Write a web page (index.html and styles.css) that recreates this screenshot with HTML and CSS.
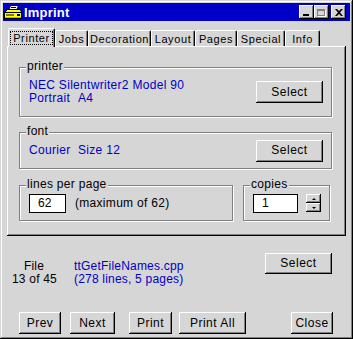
FILE: index.html
```html
<!DOCTYPE html>
<html lang="en">
<head>
  <meta charset="UTF-8" />
  <title>Imprint</title>
  <link rel="stylesheet" href="styles.css">
</head>
<body>
  <div class="window">
    <div class="titlebar">
      <svg class="app-icon" width="18" height="15" viewBox="0 0 18 15">
        <polygon points="6.5,0.5 14.5,0.5 12.5,5.5 4.5,5.5" fill="#fff" stroke="#000"/>
        <line x1="7" y1="2.5" x2="12" y2="2.5" stroke="#000"/>
        <polygon points="3.5,4.5 16.5,4.5 17.5,7.5 0.5,7.5" fill="#ffff00" stroke="#000"/>
        <rect x="0.5" y="7.5" width="17" height="6" fill="#ffff00" stroke="#000"/>
        <rect x="2" y="9" width="8" height="2" fill="#808000"/>
        <rect x="13" y="9" width="3" height="2" fill="#000"/>
        <line x1="1" y1="12.5" x2="17" y2="12.5" stroke="#c0c000"/>
      </svg>
      <span class="title">Imprint</span>
      <div class="title-buttons">
        <div class="tbtn"><span class="glyph-min"></span></div>
        <div class="tbtn"><span class="glyph-max"></span></div>
        <div class="tbtn close">
          <svg width="8" height="7" viewBox="0 0 8 7">
            <path d="M0 0h2l2 2 2-2h2L5 3.5 8 7H6L4 5 2 7H0l3-3.5z" fill="#000"/>
          </svg>
        </div>
      </div>
    </div>

    <div class="main">
      <div class="tabs">
        <div class="tab active"><span class="focus">Printer</span></div>
        <div class="tab t-jobs">Jobs</div>
        <div class="tab t-deco">Decoration</div>
        <div class="tab t-layout">Layout</div>
        <div class="tab t-pages">Pages</div>
        <div class="tab t-special">Special</div>
        <div class="tab t-info">Info</div>
      </div>

      <div class="panel">
        <div class="group g-printer">
          <span class="legend">printer</span>
          <div class="info">
            <div>NEC Silentwriter2 Model 90</div>
            <div><span class="col1">Portrait</span>A4</div>
          </div>
          <div class="btn wide">Select</div>
        </div>

        <div class="group g-font">
          <span class="legend">font</span>
          <div class="info">
            <div><span class="col1">Courier</span>Size 12</div>
          </div>
          <div class="btn wide">Select</div>
        </div>

        <div class="group-row">
          <div class="group g-lines">
            <span class="legend">lines per page</span>
            <div class="field lines-field">62</div>
            <span class="note">(maximum of 62)</span>
          </div>
          <div class="group g-copies">
            <span class="legend">copies</span>
            <div class="field copies-field">1</div>
            <div class="spinner">
              <div class="spin"><span class="arrow-up"></span></div>
              <div class="spin"><span class="arrow-down"></span></div>
            </div>
          </div>
        </div>
      </div>

      <div class="file-row">
        <div class="file-label">
          <div>File</div>
          <div>13 of 45</div>
        </div>
        <div class="file-name">
          <div>ttGetFileNames.cpp</div>
          <div>(278 lines, 5 pages)</div>
        </div>
        <div class="btn wide file-select">Select</div>
      </div>

      <div class="actions">
        <div class="btn b-prev">Prev</div>
        <div class="btn b-next">Next</div>
        <div class="btn b-print">Print</div>
        <div class="btn wide b-all">Print All</div>
        <div class="btn b-close">Close</div>
      </div>
    </div>
  </div>
</body>
</html>
```

FILE: styles.css
```css
body {
  margin: 0;
  font-family: 'Liberation Sans', Arial, sans-serif;
  font-size: 11px;
  color: #000;
}

.window {
  width: 353px;
  height: 339px;
  box-sizing: border-box;
  padding: 3px;
  background: #d6d6d6;
  box-shadow: inset -1px -1px #000, inset 1px 1px #d6d6d6,
              inset -2px -2px #808080, inset 2px 2px #fff;
  overflow: hidden;
}

.titlebar {
  height: 18px;
  background: #0000c8;
  display: flex;
  align-items: center;
  padding-left: 1px;
}

.app-icon {
  margin-right: 2px;
}

.title {
  color: #fff;
  font-weight: bold;
  font-size: 13px;
  letter-spacing: 0.2px;
}

.title-buttons {
  margin-left: auto;
  margin-right: 4px;
  display: flex;
}

.tbtn {
  width: 15px;
  height: 14px;
  box-sizing: border-box;
  background: #d6d6d6;
  box-shadow: inset -1px -1px #000, inset 1px 1px #fff, inset -2px -2px #808080;
  display: flex;
  align-items: center;
  justify-content: center;
}

.tbtn.close {
  margin-left: 2px;
}

.glyph-min {
  width: 6px;
  height: 2px;
  background: #000;
  margin-top: 6px;
  margin-right: 2px;
}

.glyph-max {
  width: 8px;
  height: 7px;
  box-sizing: border-box;
  border: 1px solid #808080;
  border-top-width: 2px;
  box-shadow: 1px 1px 0 #fff;
  margin-right: 1px;
}

.main {
  padding: 7px 4px 0 4px;
}

.tabs {
  display: flex;
  align-items: flex-end;
  height: 19px;
  margin-bottom: -1px;
  position: relative;
  z-index: 1;
  font-size: 11px;
  letter-spacing: 0.6px;
  white-space: nowrap;
}

.tab {
  height: 16px;
  box-sizing: border-box;
  padding-top: 2px;
  text-align: center;
  border-top: 1px solid #fff;
  border-left: 1px solid #fff;
  border-right: 1px solid #000;
  border-radius: 2px 2px 0 0;
  box-shadow: inset -1px 0 #808080;
  margin-bottom: 1px;
}

.tab.active {
  height: 19px;
  width: 47px;
  margin-left: 1px;
  margin-bottom: 0;
  background: #d6d6d6;
  padding-top: 3px;
}

.focus {
  outline: 1px dotted #000;
  outline-offset: 0;
  padding: 0 2px;
}

.t-jobs { width: 33px; }
.t-deco { width: 63px; }
.t-layout { width: 44px; }
.t-pages { width: 42px; }
.t-special { width: 48px; }
.t-info { width: 35px; }

.panel {
  height: 190px;
  box-sizing: border-box;
  padding: 21px 12px 0 12px;
  box-shadow: inset -1px -1px #000, inset 1px 1px #fff, inset -2px -2px #808080;
}

.group {
  position: relative;
  box-sizing: border-box;
  border: 1px solid #808080;
  box-shadow: 1px 1px 0 #fff, inset 1px 1px 0 #fff;
  display: flex;
  align-items: center;
  padding: 0 8px 0 9px;
  width: 313px;
}

.legend {
  position: absolute;
  top: -8px;
  left: 6px;
  padding: 0 1px;
  background: #d6d6d6;
  line-height: 13px;
  font-size: 12px;
  letter-spacing: 0.3px;
  white-space: nowrap;
}

.g-printer {
  height: 50px;
}

.g-font {
  height: 37px;
  margin-top: 15px;
}

.info {
  color: #0000c8;
  line-height: 13px;
  font-size: 12px;
  letter-spacing: 0.3px;
  white-space: nowrap;
}

.col1 {
  display: inline-block;
  width: 49px;
}

.group .btn {
  margin-left: auto;
}

.group-row {
  display: flex;
  margin-top: 16px;
  gap: 10px;
}

.g-lines {
  width: 214px;
  height: 36px;
}

.g-copies {
  width: 87px;
  height: 36px;
}

.field {
  height: 19px;
  box-sizing: border-box;
  background: #fff;
  border: 1px solid #000;
  box-shadow: 0 0 0 1px #d6d6d6;
  padding-left: 8px;
  line-height: 17px;
  font-size: 12px;
  margin-top: 1px;
}

.lines-field {
  width: 37px;
}

.copies-field {
  width: 47px;
  margin-top: 0;
}

.note {
  margin-left: 9px;
  font-size: 12px;
  letter-spacing: 0.3px;
  white-space: nowrap;
}

.spinner {
  margin-left: 8px;
  display: flex;
  flex-direction: column;
}

.spin {
  width: 15px;
  height: 9px;
  box-sizing: border-box;
  box-shadow: inset -1px -1px #000, inset 1px 1px #fff, inset -2px -2px #808080;
  display: flex;
  align-items: center;
  justify-content: center;
}

.arrow-up, .arrow-down {
  width: 0;
  height: 0;
  border-left: 2px solid transparent;
  border-right: 2px solid transparent;
}

.arrow-up {
  border-bottom: 2px solid #000;
}

.arrow-down {
  border-top: 2px solid #000;
}

.btn {
  height: 22px;
  box-sizing: border-box;
  background: #d6d6d6;
  box-shadow: inset -1px -1px #000, inset 1px 1px #fff, inset -2px -2px #808080;
  display: flex;
  align-items: center;
  justify-content: center;
  font-size: 12px;
  letter-spacing: 0.5px;
  padding-bottom: 1px;
  white-space: nowrap;
}

.btn.wide {
  width: 67px;
}

.file-row {
  display: flex;
  margin-top: 17px;
  line-height: 13px;
  font-size: 12px;
  letter-spacing: 0.2px;
  white-space: nowrap;
}

.file-label {
  width: 44px;
  margin-left: 5px;
  text-align: center;
  padding-top: 7px;
}

.file-name {
  margin-left: 18px;
  padding-top: 7px;
  color: #0000c8;
}

.file-select {
  margin-left: auto;
  margin-right: 14px;
  height: 21px;
}

.actions {
  display: flex;
  margin-top: 26px;
  padding-left: 12px;
}

.b-prev { width: 42px; }
.b-next { width: 45px; margin-left: 9px; }
.b-print { width: 43px; margin-left: 14px; }
.b-all { margin-left: 7px; }
.b-close { width: 42px; margin-left: auto; margin-right: 13px; }
```
